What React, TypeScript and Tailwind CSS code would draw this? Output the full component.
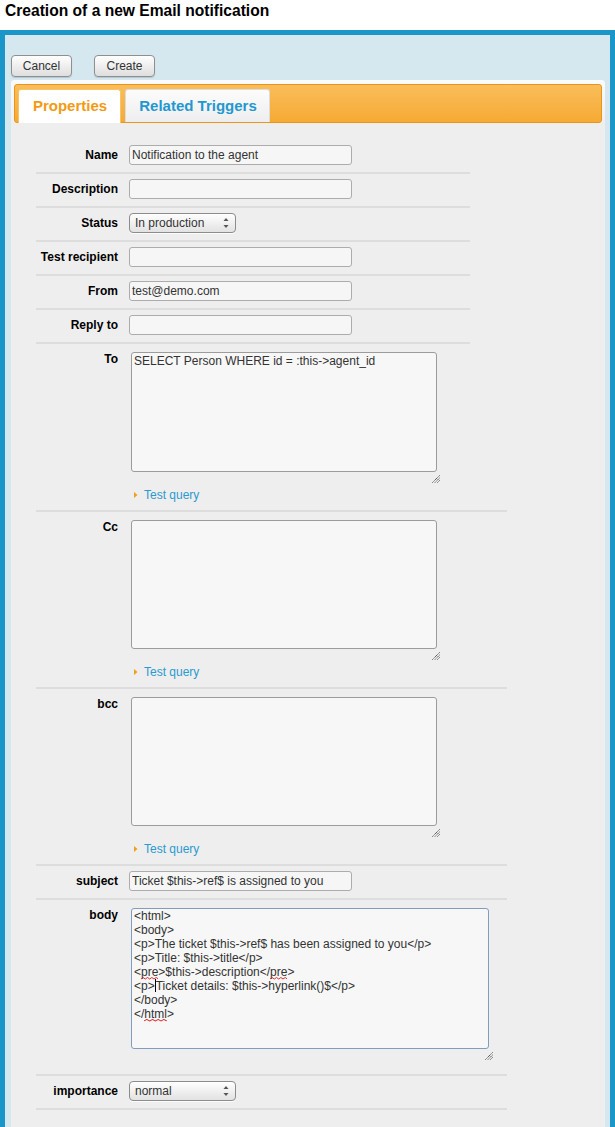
import type { ReactNode } from "react";

function Grip() {
  return (
    <svg width="8" height="8" viewBox="0 0 8 8" className="block">
      <path
        d="M7.5 0.5 L0.5 7.5 M7.5 3 L3 7.5 M7.5 5.5 L5.5 7.5"
        stroke="#222"
        strokeWidth="1"
        strokeDasharray="1 0.8"
        fill="none"
      />
    </svg>
  );
}

function Arrows() {
  return (
    <svg width="6" height="12" viewBox="0 0 6 12" className="absolute right-[6px] top-[3px]">
      <path d="M0.5 4 L3 1 L5.5 4 Z" fill="#555" />
      <path d="M0.5 8 L3 11 L5.5 8 Z" fill="#555" />
    </svg>
  );
}

function Select({ value }: { value: string }) {
  return (
    <div className="relative flex h-[20px] w-[107px] items-center rounded-[4px] border border-[#8c8c8c] bg-linear-to-b from-white to-[#e2e2e2] pl-[5px] text-[12px] text-[#333] shadow-[0_1px_0_rgba(255,255,255,0.8)]">
      {value}
      <Arrows />
    </div>
  );
}

function TextInput({ value = "" }: { value?: string }) {
  return (
    <input
      readOnly
      defaultValue={value}
      className="block h-[20px] w-[223px] rounded-[3px] border border-[#acacac] bg-[#f6f6f6] px-[2px] text-[12px] text-[#333] outline-none"
    />
  );
}

function Row({ label, children }: { label: string; children: ReactNode }) {
  return (
    <div className="flex items-center border-b-2 border-[#dddddd] pt-[5px] pb-[7px]">
      <div className="w-[82px] text-right text-[12px] font-bold text-black">{label}</div>
      <div className="ml-[11px]">{children}</div>
    </div>
  );
}

function TestQuery() {
  return (
    <div className="mt-[4px] flex h-[16px] items-center pl-[5px] text-[12px] leading-[16px] text-[#2a9ad0]">
      <svg width="4" height="6" viewBox="0 0 4 6" className="mr-[6px]">
        <path d="M0 0 L3.5 3 L0 6 Z" fill="#f0a020" />
      </svg>
      Test query
    </div>
  );
}

function AreaRow({
  label,
  height,
  value = "",
}: {
  label: string;
  height: string;
  value?: string;
}) {
  return (
    <div className="flex items-start border-b-2 border-[#dddddd] pt-[8px] pb-[7px]">
      <div className="w-[82px] text-right text-[12px] leading-[14px] font-bold text-black">{label}</div>
      <div className="ml-[11px] w-[311px]">
        <div className="pl-[2px]">
          <textarea
            readOnly
            defaultValue={value}
            className={`block w-[306px] resize-none rounded-[3px] border border-[#9c9c9c] bg-[#f7f7f7] px-[2px] py-[1px] text-[12px] leading-[14px] text-[#333] outline-none ${height}`}
          />
        </div>
        <div className="flex h-[11px] items-end justify-end">
          <Grip />
        </div>
        <TestQuery />
      </div>
    </div>
  );
}

// spell-check wave drawn under a word
function Squiggle({ children }: { children: ReactNode }) {
  return (
    <span className="relative inline-block">
      {children}
      <svg
        width="100%"
        height="3"
        preserveAspectRatio="none"
        viewBox="0 0 16 3"
        className="absolute bottom-[-1px] left-0"
      >
        <path d="M0 2 L2 0.5 L4 2 L6 0.5 L8 2 L10 0.5 L12 2 L14 0.5 L16 2" stroke="#e02020" strokeWidth="0.9" fill="none" />
      </svg>
    </span>
  );
}

export default function App() {
  return (
    <div className="min-h-screen bg-white font-['Liberation_Sans',Arial,sans-serif]">
      <h1 className="h-[30px] px-[5px] pt-[1px] text-[15.6px] leading-[20px] font-bold text-black">
        Creation of a new Email notification
      </h1>

      <div className="border-x-[5px] border-t-[5px] border-[#1a96c8] bg-[#d6e8ef] pr-[5px] pl-[6px]">
        <div className="flex gap-[22px] pt-[20px]">
          <button className="h-[22px] w-[61px] rounded-[4px] border border-[#8f8f8f] bg-linear-to-b from-white to-[#dedede] text-[12px] text-[#333] shadow-[0_1px_1px_rgba(0,0,0,0.15)]">
            Cancel
          </button>
          <button className="h-[22px] w-[61px] rounded-[4px] border border-[#8f8f8f] bg-linear-to-b from-white to-[#dedede] text-[12px] text-[#333] shadow-[0_1px_1px_rgba(0,0,0,0.15)]">
            Create
          </button>
        </div>

        <div className="mt-[3px] rounded-t-[4px] bg-[#eeeeee] pb-[40px]">
          <div className="rounded-t-[4px] bg-linear-to-b from-[#fbfbfb] to-[#efefef] px-[3px] pt-[4px]">
            <div className="flex h-[39px] items-end gap-[4px] rounded-[3px] border border-[#e8951a] bg-linear-to-b from-[#f9bd5a] to-[#f6aa32] pl-[3px]">
              <div className="-mb-px flex h-[34px] w-[103px] items-center justify-center rounded-t-[3px] border border-b-0 border-[#f6c46a] bg-white pl-px text-[15px] font-bold text-[#f39a14]">
                Properties
              </div>
              <div className="flex h-[33px] w-[145px] items-center justify-center rounded-t-[3px] border border-b-0 border-[#dcdcdc] bg-linear-to-b from-[#fcfcfc] to-[#eeeeee] pl-px text-[15px] font-bold text-[#2398cf]">
                Related Triggers
              </div>
            </div>
          </div>

          <div className="pt-[17px] pl-[25px]">
            <div className="w-[434px]">
              <Row label="Name">
                <TextInput value="Notification to the agent" />
              </Row>
              <Row label="Description">
                <TextInput />
              </Row>
              <Row label="Status">
                <Select value="In production" />
              </Row>
              <Row label="Test recipient">
                <TextInput />
              </Row>
              <Row label="From">
                <TextInput value="test@demo.com" />
              </Row>
              <Row label="Reply to">
                <TextInput />
              </Row>
            </div>

            <div className="w-[471px]">
              <AreaRow
                label="To"
                height="h-[120px]"
                value="SELECT Person WHERE id = :this->agent_id"
              />
              <AreaRow label="Cc" height="h-[129px]" />
              <AreaRow label="bcc" height="h-[129px]" />

              <Row label="subject">
                <TextInput value="Ticket $this->ref$ is assigned to you" />
              </Row>

              <div className="flex items-start border-b-2 border-[#dddddd] pt-[8px] pb-[14px]">
                <div className="w-[82px] text-right text-[12px] leading-[14px] font-bold text-black">body</div>
                <div className="ml-[11px] w-[364px]">
                  <div className="pl-[2px]">
                    <div className="h-[141px] w-[358px] rounded-[3px] border border-[#7e9dbf] bg-[#f7f7f7] px-[2px] text-[12px] leading-[14px] whitespace-pre text-[#333]">
                      <div>{"<html>"}</div>
                      <div>{"<body>"}</div>
                      <div>{"<p>The ticket $this->ref$ has been assigned to you</p>"}</div>
                      <div>{"<p>Title: $this->title</p>"}</div>
                      <div>
                        {"<"}
                        <Squiggle>pre</Squiggle>
                        {">$this->description</"}
                        <Squiggle>pre</Squiggle>
                        {">"}
                      </div>
                      <div>
                        {"<p>"}
                        <span className="inline-block h-[13px] w-px bg-black align-[-2px]" />
                        {"Ticket details: $this->hyperlink()$</p>"}
                      </div>
                      <div>{"</body>"}</div>
                      <div>
                        {"</"}
                        <Squiggle>html</Squiggle>
                        {">"}
                      </div>
                    </div>
                  </div>
                  <div className="flex h-[11px] items-end justify-end">
                    <Grip />
                  </div>
                </div>
              </div>

              <Row label="importance">
                <Select value="normal" />
              </Row>
            </div>
          </div>
        </div>
      </div>
    </div>
  );
}
